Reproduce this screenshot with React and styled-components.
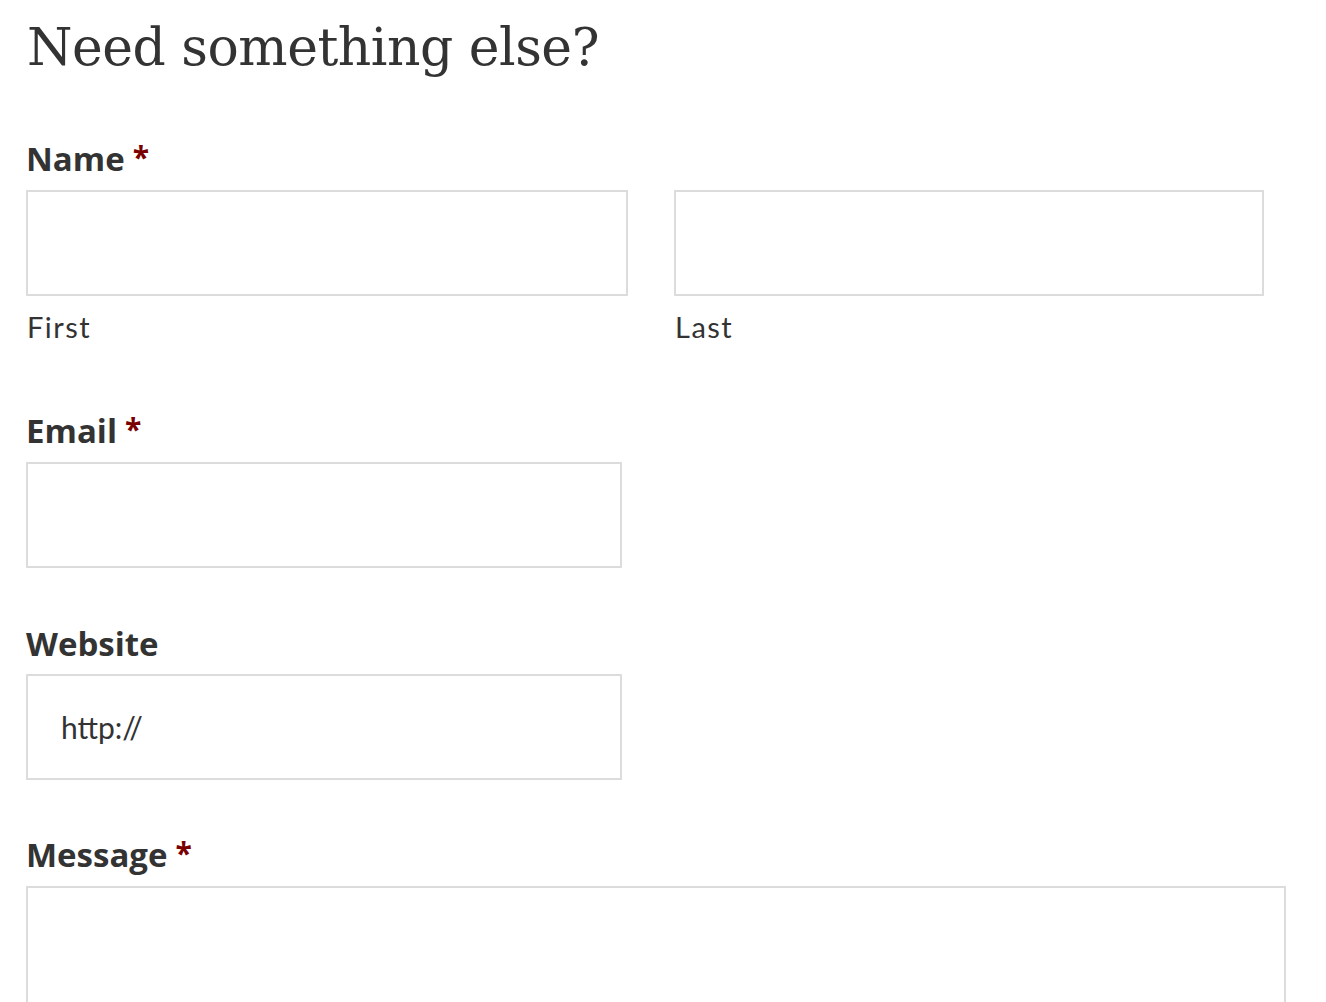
import styled, { createGlobalStyle } from "styled-components";

const GlobalStyle = createGlobalStyle`
  html, body {
    margin: 0;
    padding: 0;
    background: #fff;
  }
  body {
    font-family: "Lato", "Liberation Sans", sans-serif;
    color: #333;
  }
`;

const Page = styled.div`
  padding: 0 40px 0 26px;
  height: 1002px;
  overflow: hidden;
`;

const Heading = styled.h2`
  margin: 0;
  padding-top: 14px;
  padding-left: 1px;
  font-family: "DejaVu Serif", "Liberation Serif", serif;
  font-weight: 400;
  font-size: 52px;
  line-height: 66px;
  color: #333;
  letter-spacing: -0.5px;
`;

const Form = styled.form`
  display: flex;
  flex-direction: column;
  padding-top: 59px;
`;

const Field = styled.div`
  display: flex;
  flex-direction: column;
  margin-bottom: ${(p) => p.gap || 55}px;
`;

const Label = styled.label`
  font-family: "Open Sans", "Lato", sans-serif;
  font-size: 33px;
  font-weight: 700;
  line-height: 40px;
  margin-bottom: 10px;
  color: #333;
`;

const Required = styled.span`
  color: #7a0000;
  margin-left: 8px;
  font-size: 30px;
  font-weight: 700;
  position: relative;
  top: -3px;
`;

const Row = styled.div`
  display: flex;
  gap: 46px;
`;

const Column = styled.div`
  display: flex;
  flex-direction: column;
  width: ${(p) => p.width}px;
`;

const Input = styled.input`
  box-sizing: border-box;
  width: ${(p) => p.width || "100%"};
  height: 106px;
  border: 2px solid #dcdcdc;
  border-radius: 0;
  padding: 0 33px;
  font-family: "Lato", "Liberation Sans", sans-serif;
  font-size: 30px;
  color: #333;
  background: #fff;
  outline: none;
`;

const TextArea = styled.textarea`
  box-sizing: border-box;
  width: 100%;
  height: 200px;
  border: 2px solid #dcdcdc;
  border-radius: 0;
  resize: none;
  background: #fff;
  outline: none;
`;

const SubLabel = styled.span`
  font-size: 29px;
  font-weight: 400;
  line-height: 34px;
  letter-spacing: 1.5px;
  margin-top: 14px;
  padding-left: 1px;
  color: #333;
`;

export default function App() {
  return (
    <>
      <GlobalStyle />
      <Page>
        <Heading>Need something else?</Heading>
        <Form>
          <Field gap={67}>
            <Label>
              Name<Required>*</Required>
            </Label>
            <Row>
              <Column width={602}>
                <Input type="text" />
                <SubLabel>First</SubLabel>
              </Column>
              <Column width={590}>
                <Input type="text" />
                <SubLabel>Last</SubLabel>
              </Column>
            </Row>
          </Field>
          <Field gap={56}>
            <Label>
              Email<Required>*</Required>
            </Label>
            <Input type="email" width="596px" />
          </Field>
          <Field>
            <Label>Website</Label>
            <Input type="url" width="596px" defaultValue="http://" />
          </Field>
          <Field>
            <Label>
              Message<Required>*</Required>
            </Label>
            <TextArea />
          </Field>
        </Form>
      </Page>
    </>
  );
}
